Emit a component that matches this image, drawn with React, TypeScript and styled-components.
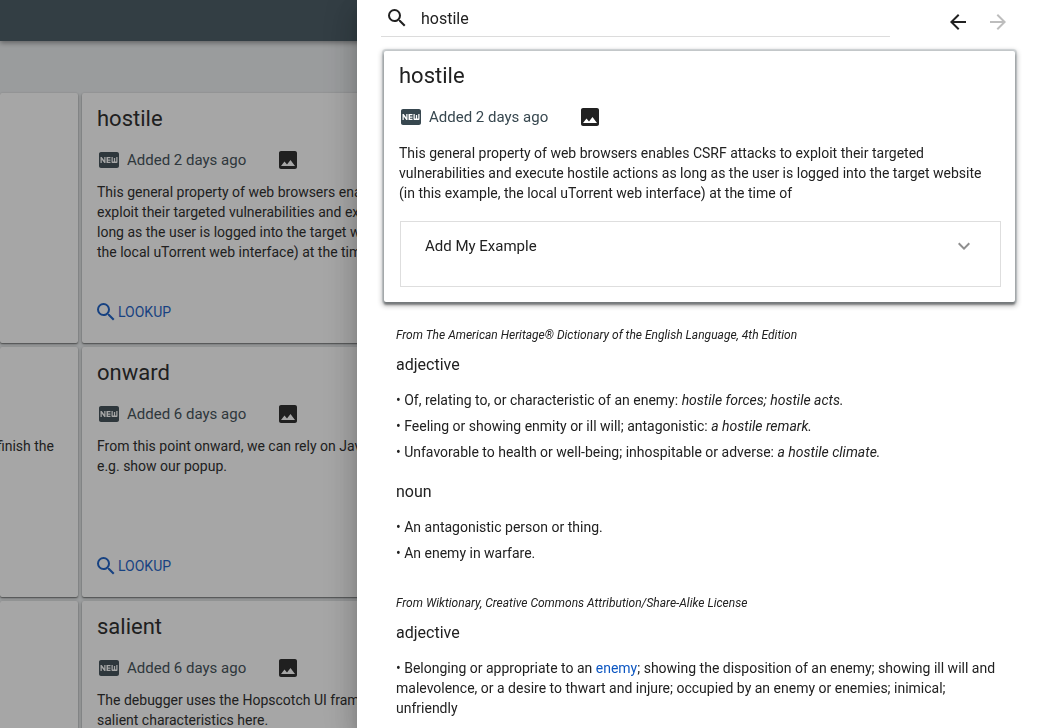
import React from "react";
import styled, { createGlobalStyle } from "styled-components";
import {
  MdArrowBack,
  MdArrowForward,
  MdExpandMore,
  MdFiberNew,
  MdImage,
  MdSearch,
} from "react-icons/md";

const GlobalStyle = createGlobalStyle`
  *, *::before, *::after { box-sizing: border-box; }
  html, body, #root { height: 100%; }
  body {
    margin: 0;
    overflow: hidden;
    font-family: Roboto, "Liberation Sans", sans-serif;
    font-size: 14px;
    line-height: 20px;
    color: #212121;
    background: #eceff1;
  }
  h1, h2, h3, p, ul { margin: 0; padding: 0; font-weight: 400; }
  button, input { font: inherit; color: inherit; border: 0; padding: 0; background: none; }
  button { cursor: pointer; }
  svg { display: block; flex: none; }
`;

const Shell = styled.div`
  height: 100vh;
  overflow: hidden;
`;

const TopBar = styled.header`
  position: relative;
  height: 41px;
  background: #40535d;
  box-shadow: 0 2px 5px rgba(0, 0, 0, 0.4);
`;

const Board = styled.main`
  display: grid;
  grid-template-columns: 78px minmax(0, 1fr);
  grid-auto-rows: 250px;
  gap: 4px;
  padding-top: 52px;
`;

const WordCard = styled.article<{ $end?: boolean }>`
  display: flex;
  flex-direction: column;
  align-items: ${(p) => (p.$end ? "flex-end" : "flex-start")};
  padding: 13px ${(p) => (p.$end ? 24 : 15)}px 19px 15px;
  overflow: hidden;
  background: #fff;
  border-radius: 2px;
  box-shadow: 0 1px 3px rgba(0, 0, 0, 0.4), 0 1px 1px rgba(0, 0, 0, 0.3);
`;

const WordTitle = styled.h2`
  font-size: 22px;
  line-height: 26px;
`;

const Meta = styled.div<{ $gap: number }>`
  display: flex;
  align-items: center;
  margin: 16px 0 ${(p) => p.$gap}px;
  font-size: 15px;
  line-height: 24px;
  color: #37474f;
`;

const MetaText = styled.span`
  margin: 0 30px 0 6px;
`;

const ImageButton = styled.button`
  color: #212121;
`;

const Excerpt = styled.p`
  padding-right: 8px;
  white-space: pre-line;
`;

const TailText = styled.p`
  padding-top: 76px;
  white-space: nowrap;
`;

const LookupButton = styled.button`
  display: flex;
  align-items: center;
  margin-top: auto;
  margin-left: -3px;
  line-height: 24px;
  color: #1259c3;
`;

const Backdrop = styled.div`
  position: fixed;
  inset: 0;
  background: rgba(33, 33, 33, 0.4);
`;

const Drawer = styled.aside`
  position: fixed;
  inset: 0 0 0 357px;
  overflow: hidden;
  background: #fff;
  box-shadow: 0 8px 10px -5px rgba(0, 0, 0, 0.2),
    0 16px 24px 2px rgba(0, 0, 0, 0.14), 0 6px 30px 5px rgba(0, 0, 0, 0.12);
`;

const DrawerHead = styled.div`
  display: flex;
  gap: 48px;
  padding: 0 20px 0 24px;
`;

const SearchField = styled.label`
  flex: 1;
  display: flex;
  align-items: center;
  gap: 12px;
  height: 37px;
  padding: 0 4px;
  border-bottom: 1px solid #dcdcdc;
`;

const SearchInput = styled.input`
  flex: 1;
  min-width: 0;
  height: 24px;
  font-size: 16px;
  outline: 0;
`;

const NavButtons = styled.nav`
  display: flex;
`;

const NavButton = styled.button`
  display: grid;
  place-items: center;
  width: 40px;
  height: 44px;
  color: #212121;
  &:disabled {
    color: #bdbdbd;
  }
`;

const EntryCard = styled.section`
  margin: 7px 23px 0 27px;
  padding: 12px 14px 15px 15px;
  border-radius: 2px;
  background: #fff;
  box-shadow: 0 0 1px 2px rgba(69, 90, 100, 0.2),
    0 3px 2px 0 rgba(33, 33, 33, 0.4), 0 2px 5px 2px rgba(33, 33, 33, 0.3);
`;

const ExamplePanel = styled.div`
  margin: 18px 0 0 1px;
  padding-bottom: 16px;
  border: 1px solid #dedede;
`;

const PanelToggle = styled.button`
  display: flex;
  align-items: center;
  justify-content: space-between;
  width: 100%;
  height: 48px;
  padding: 0 24px;
  font-size: 15px;
  svg {
    color: #8f8f8f;
  }
`;

const Definitions = styled.div`
  padding: 23px 38px 0 39px;
`;

const Source = styled.p`
  font-size: 12px;
  font-style: italic;
  ul + & {
    margin-top: 30px;
  }
`;

const PartOfSpeech = styled.h3`
  margin: 10px 0 15px;
  font-size: 16px;
  ul + & {
    margin-top: 20px;
  }
`;

const Senses = styled.ul`
  display: flex;
  flex-direction: column;
  gap: 6px;
  list-style: none;
`;

const WordLink = styled.a`
  color: #0d57c2;
  text-decoration: none;
`;

function AddedMeta({ days, gap }: { days: number; gap: number }) {
  return (
    <Meta $gap={gap}>
      <MdFiberNew size={24} />
      <MetaText>Added {days} days ago</MetaText>
      <ImageButton type="button" aria-label="Show image">
        <MdImage size={24} />
      </ImageButton>
    </Meta>
  );
}

const words = [
  {
    word: "hostile",
    days: 2,
    text: "This general property of web browsers enables CSRF attacks to\nexploit their targeted vulnerabilities and execute hostile actions as\nlong as the user is logged into the target website (in this example,\nthe local uTorrent web interface) at the time of",
    neighbour: "",
  },
  {
    word: "onward",
    days: 6,
    text: "From this point onward, we can rely on JavaScript,\ne.g. show our popup.",
    neighbour: "finish the",
  },
  {
    word: "salient",
    days: 6,
    text: "The debugger uses the Hopscotch UI framework\nsalient characteristics here.",
    neighbour: "",
  },
];

export default function App() {
  return (
    <Shell>
      <GlobalStyle />
      <TopBar />
      <Board>
        {words.map((w) => (
          <React.Fragment key={w.word}>
            <WordCard $end>
              {w.neighbour && <TailText>{w.neighbour}</TailText>}
            </WordCard>
            <WordCard>
              <WordTitle>{w.word}</WordTitle>
              <AddedMeta days={w.days} gap={10} />
              <Excerpt>{w.text}</Excerpt>
              <LookupButton type="button">
                <MdSearch size={24} />
                LOOKUP
              </LookupButton>
            </WordCard>
          </React.Fragment>
        ))}
      </Board>
      <Backdrop />
      <Drawer>
        <DrawerHead>
          <SearchField>
            <MdSearch size={24} />
            <SearchInput type="text" aria-label="Search" defaultValue="hostile" />
          </SearchField>
          <NavButtons>
            <NavButton type="button" aria-label="Back">
              <MdArrowBack size={24} />
            </NavButton>
            <NavButton type="button" aria-label="Forward" disabled>
              <MdArrowForward size={24} />
            </NavButton>
          </NavButtons>
        </DrawerHead>
        <EntryCard>
          <WordTitle>hostile</WordTitle>
          <AddedMeta days={2} gap={14} />
          <Excerpt>
            This general property of web browsers enables CSRF attacks to
            exploit their targeted vulnerabilities and execute hostile actions
            as long as the user is logged into the target website (in this
            example, the local uTorrent web interface) at the time of
          </Excerpt>
          <ExamplePanel>
            <PanelToggle type="button" aria-expanded={false}>
              Add My Example
              <MdExpandMore size={24} />
            </PanelToggle>
          </ExamplePanel>
        </EntryCard>
        <Definitions>
          <Source>
            From The American Heritage® Dictionary of the English Language, 4th
            Edition
          </Source>
          <PartOfSpeech>adjective</PartOfSpeech>
          <Senses>
            <li>
              • Of, relating to, or characteristic of an enemy:{" "}
              <em>hostile forces; hostile acts.</em>
            </li>
            <li>
              • Feeling or showing enmity or ill will; antagonistic:{" "}
              <em>a hostile remark.</em>
            </li>
            <li>
              • Unfavorable to health or well-being; inhospitable or adverse:{" "}
              <em>a hostile climate.</em>
            </li>
          </Senses>
          <PartOfSpeech>noun</PartOfSpeech>
          <Senses>
            <li>• An antagonistic person or thing.</li>
            <li>• An enemy in warfare.</li>
          </Senses>
          <Source>
            From Wiktionary, Creative Commons Attribution/Share-Alike License
          </Source>
          <PartOfSpeech>adjective</PartOfSpeech>
          <Senses>
            <li>
              • Belonging or appropriate to an{" "}
              <WordLink href="#enemy">enemy</WordLink>; showing the disposition
              of an enemy; showing ill will and malevolence, or a desire to
              thwart and injure; occupied by an enemy or enemies; inimical;
              unfriendly
            </li>
          </Senses>
        </Definitions>
      </Drawer>
    </Shell>
  );
}
